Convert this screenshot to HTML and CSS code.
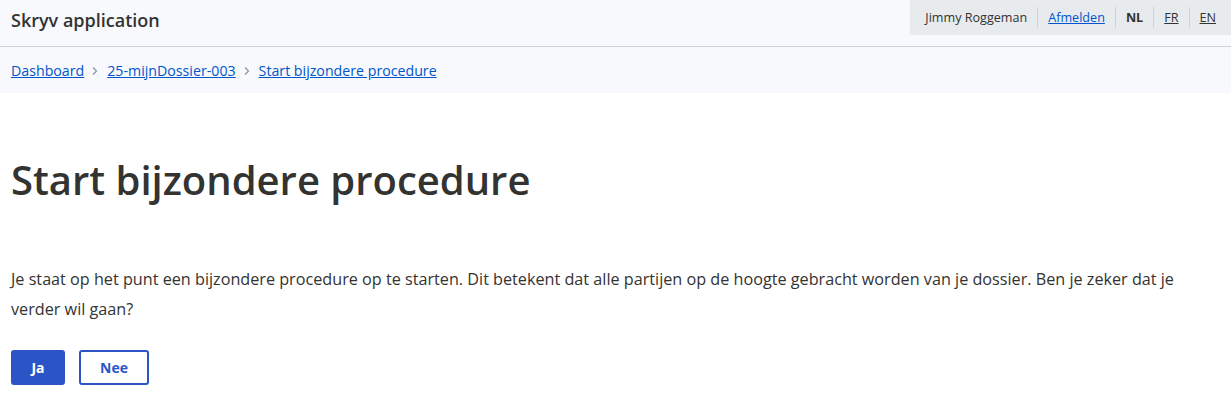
FILE: index.html
```html
<!DOCTYPE html>
<html lang="nl">
<head>
  <meta charset="UTF-8">
  <title>Skryv application</title>
  <link rel="stylesheet" href="styles.css">
</head>
<body>
  <header class="topbar">
    <div class="brand">Skryv application</div>
    <div class="account">
      <span class="account-item">Jimmy Roggeman</span>
      <a class="account-item link" href="#">Afmelden</a>
      <strong class="account-item lang">NL</strong>
      <a class="account-item lang plain" href="#">FR</a>
      <a class="account-item lang plain" href="#">EN</a>
    </div>
  </header>

  <nav class="breadcrumb">
    <a href="#">Dashboard</a>
    <svg class="sep" width="6" height="10" viewBox="0 0 6 10"><path d="M1 1.5 L4.5 5 L1 8.5" fill="none" stroke="#8a94a0" stroke-width="1.2"/></svg>
    <a href="#">25-mijnDossier-003</a>
    <svg class="sep" width="6" height="10" viewBox="0 0 6 10"><path d="M1 1.5 L4.5 5 L1 8.5" fill="none" stroke="#8a94a0" stroke-width="1.2"/></svg>
    <a href="#">Start bijzondere procedure</a>
  </nav>

  <main class="content">
    <h1>Start bijzondere procedure</h1>
    <p>Je staat op het punt een bijzondere procedure op te starten. Dit betekent dat alle partijen op de hoogte gebracht worden van je dossier. Ben je zeker dat je verder wil gaan?</p>
    <div class="actions">
      <button class="btn primary">Ja</button>
      <button class="btn secondary">Nee</button>
    </div>
  </main>
</body>
</html>
```

FILE: styles.css
```css
body {
  margin: 0;
  padding: 0;
  background: #fff;
  color: #333332;
  font-family: "Open Sans", sans-serif;
}

/* Top bar */
.topbar {
  display: flex;
  justify-content: space-between;
  align-items: flex-start;
  height: 46px;
  background-color: #f7f9fc;
  border-bottom: 1px solid #cbd2da;
}
.brand {
  padding: 8px 0 0 11px;
  font-size: 18px;
  font-weight: 600;
  color: #333332;
}
.account {
  display: flex;
  align-items: center;
  height: 35px;
  padding: 0 5px 0 11px;
  background-color: #e8ebee;
  font-size: 12.6px;
}
.account-item {
  padding: 0 10px;
  line-height: 21px;
  border-left: 1px solid #cbd2da;
  color: #333332;
}
.account-item:first-child {
  border-left: none;
  padding-left: 4px;
}
.account .link {
  color: #0055cc;
}
.account .lang {
  font-weight: 700;
}
.account .plain {
  font-weight: 400;
  color: #333332;
}

/* Breadcrumb */
.breadcrumb {
  display: flex;
  align-items: center;
  height: 46px;
  padding: 0 11px;
  background-color: #f7f9fc;
  font-size: 14.2px;
}
.breadcrumb a {
  color: #0055cc;
}
.breadcrumb .sep {
  margin: 1px 9px 0 8px;
}

/* Content */
.content {
  padding: 0 11px;
}
h1 {
  margin: 57px 0 0;
  font-size: 40px;
  font-weight: 600;
  line-height: 60px;
  color: #333332;
}
p {
  margin: 54px 0 0;
  font-size: 16.2px;
  line-height: 30px;
  max-width: 1195px;
}
.actions {
  display: flex;
  gap: 14px;
  margin-top: 26px;
}
.btn {
  height: 35px;
  padding: 0;
  font-family: inherit;
  font-size: 14px;
  font-weight: 700;
  border-radius: 3px;
  cursor: pointer;
}
.primary {
  width: 54px;
  color: #fff;
  background-color: #2b55c7;
  border: 2px solid #2b55c7;
}
.secondary {
  width: 70px;
  color: #2b55c7;
  background-color: #fff;
  border: 2px solid #2b55c7;
}
```
